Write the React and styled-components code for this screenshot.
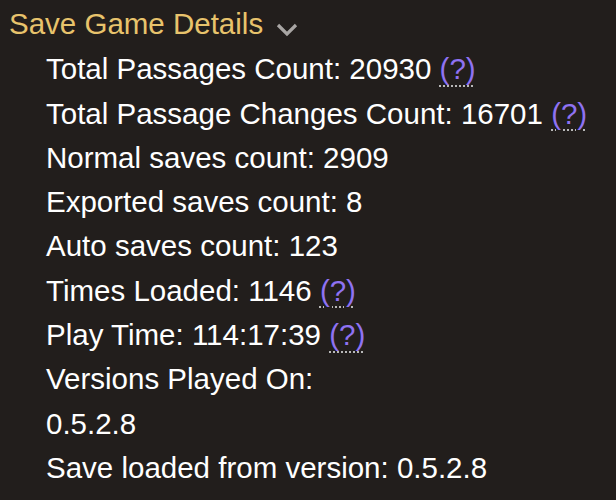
import React from 'react';
import styled, { createGlobalStyle } from 'styled-components';

const GlobalStyle = createGlobalStyle`
  html, body {
    margin: 0;
    padding: 0;
    background: #221e1c;
  }
`;

const Panel = styled.div`
  min-height: 500px;
  box-sizing: border-box;
  padding: 2px 0 0 9px;
  background: #221e1c;
  font-family: "Liberation Sans", Arial, sans-serif;
  font-size: 29.5px;
  line-height: 44.3px;
  color: #ffffff;
`;

const Summary = styled.div`
  display: flex;
  align-items: center;
  color: #e8c36c;
`;

const Chevron = styled.svg`
  width: 22px;
  height: 14px;
  margin: 12px 0 0 13px;
`;

const List = styled.ul`
  list-style: none;
  margin: 0;
  padding: 1px 0 0 37px;
`;

const Row = styled.li`
  white-space: nowrap;
`;

const Help = styled.span`
  color: #8f72f2;
  text-decoration: underline dotted #b8b8b8;
  text-decoration-thickness: 1.5px;
  text-underline-offset: 6px;
  cursor: help;
`;

const rows = [
  { text: 'Total Passages Count: 20930', help: true },
  { text: 'Total Passage Changes Count: 16701', help: true },
  { text: 'Normal saves count: 2909' },
  { text: 'Exported saves count: 8' },
  { text: 'Auto saves count: 123' },
  { text: 'Times Loaded: 1146', help: true },
  { text: 'Play Time: 114:17:39', help: true },
  { text: 'Versions Played On:' },
  { text: '0.5.2.8' },
  { text: 'Save loaded from version: 0.5.2.8' },
];

export default function App() {
  return (
    <>
      <GlobalStyle />
      <Panel>
        <Summary>
          Save Game Details
          <Chevron viewBox="0 0 22 14">
            <path d="M2 2 L11 11 L20 2" fill="none" stroke="#a9a6a4" strokeWidth="3.2" />
          </Chevron>
        </Summary>
        <List>
          {rows.map((r) => (
            <Row key={r.text}>
              {r.text}
              {r.help && <> <Help>(?)</Help></>}
            </Row>
          ))}
        </List>
      </Panel>
    </>
  );
}
